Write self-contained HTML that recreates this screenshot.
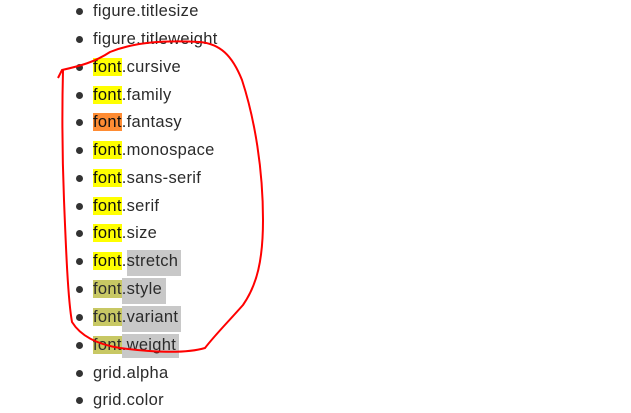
<!DOCTYPE html><html><head><style>
body{margin:0;width:631px;height:413px;background:#fff;overflow:hidden;position:relative;font-family:"Liberation Sans",sans-serif;}
.l{position:absolute;left:93px;font-size:16.5px;letter-spacing:0.3px;color:#2b2b2b;height:22px;line-height:22px;white-space:nowrap}
.l:before{content:"";position:absolute;left:-17px;top:8px;width:7px;height:7px;border-radius:50%;background:#333}
.y{background:#ffff00;color:#111}.o{background:#ff8c33;color:#111}.v{background:#c8c864}.g{background:#c8c8c8}
</style></head><body>
<div class="l" style="top:0px">figure.titlesize</div>
<div class="l" style="top:28px">figure.titleweight</div>
<div class="l" style="top:56px"><span class="y">font</span>.cursive</div>
<div class="l" style="top:84px"><span class="y">font</span>.family</div>
<div class="l" style="top:111px"><span class="o">font</span>.fantasy</div>
<div class="l" style="top:139px"><span class="y">font</span>.monospace</div>
<div class="l" style="top:167px"><span class="y">font</span>.sans-serif</div>
<div class="l" style="top:195px"><span class="y">font</span>.serif</div>
<div class="l" style="top:222px"><span class="y">font</span>.size</div>
<div class="l" style="top:250px"><span class="y">font</span>.<span class="g" style="display:inline-block;height:26px;padding-right:3px">stretch</span></div>
<div class="l" style="top:278px;height:26px"><span class="v">font</span><span class="g" style="display:inline-block;height:26px;padding-right:4px">.style</span></div>
<div class="l" style="top:306px"><span class="v">font</span><span class="g" style="display:inline-block;height:26px;padding-right:3px">.variant</span></div>
<div class="l" style="top:334px"><span class="v">font</span><span class="g" style="display:inline-block;height:24px;padding-right:3px">.weight</span></div>
<div class="l" style="top:362px">grid.alpha</div>
<div class="l" style="top:389px">grid.color</div>
<svg style="position:absolute;left:0;top:0" width="631" height="413"><path d="M58 78 L62 70 C80 66 95 62 110 52 C135 42 165 40 200 42 C220 44 232 55 242 80 C255 120 263 170 263 220 C263 260 257 285 243 305 C228 322 215 335 205 348 C185 354 150 352 120 348 C95 344 80 335 72 322 C68 300 66 250 64 200 C62 150 62 110 63 70" fill="none" stroke="#f00" stroke-width="2"/></svg>
</body></html>
